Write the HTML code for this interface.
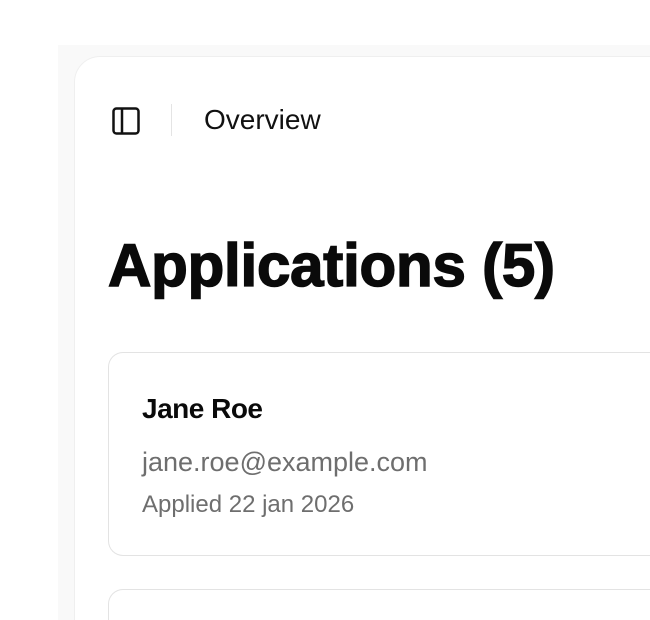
<!DOCTYPE html><html style="height:620px;overflow:hidden"><head><style>
body{margin:0;width:650px;height:620px;overflow:hidden;background:#fff;font-family:"Liberation Sans",sans-serif;position:relative}
.bg{position:absolute;left:58px;top:45px;width:592px;height:575px;background:#f9f9f9}
.panel{position:absolute;left:74px;top:56px;width:576px;height:564px;background:#fff;border-radius:26px 0 0 0;border:1px solid #efefef;border-right:0;border-bottom:0;box-sizing:border-box}
.ic{position:absolute;left:112px;top:107px}
.div{position:absolute;left:171px;top:104px;width:1px;height:32px;background:#e4e4e4}
.ov{position:absolute;left:204px;top:104px;font-size:28px;color:#111;line-height:32px}
h1{position:absolute;left:108px;top:228px;margin:0;font-size:60px;font-weight:900;letter-spacing:-0.2px;line-height:76px;color:#0a0a0a;-webkit-text-stroke:1.5px #0a0a0a}
.card{position:absolute;left:108px;width:542px;border:1.5px solid #e3e3e3;border-right:0;border-radius:15px 0 0 15px;background:#fff;box-sizing:border-box}
.n{position:absolute;left:33px;top:40px;font-size:28px;font-weight:bold;letter-spacing:-0.5px;color:#0a0a0a}
.e{position:absolute;left:33px;top:94px;font-size:27px;color:#6e6e6e}
.a{position:absolute;left:33px;top:138px;font-size:24px;color:#6e6e6e}
</style></head><body>
<div class="bg"></div><div class="panel"></div>
<svg class="ic" width="28" height="28" viewBox="0 0 28 28"><rect x="1.5" y="1.5" width="25" height="25" rx="3" fill="none" stroke="#111" stroke-width="2.5"/><line x1="10" y1="2" x2="10" y2="26" stroke="#111" stroke-width="2.5"/></svg>
<div class="div"></div><div class="ov">Overview</div>
<h1>Applications (5)</h1>
<div class="card" style="top:352px;height:204px"><div class="n">Jane Roe</div><div class="e">jane.roe@example.com</div><div class="a">Applied 22 jan 2026</div></div>
<div class="card" style="top:589px;height:31px;border-bottom:0;border-radius:15px 0 0 0"></div>
</body></html>
